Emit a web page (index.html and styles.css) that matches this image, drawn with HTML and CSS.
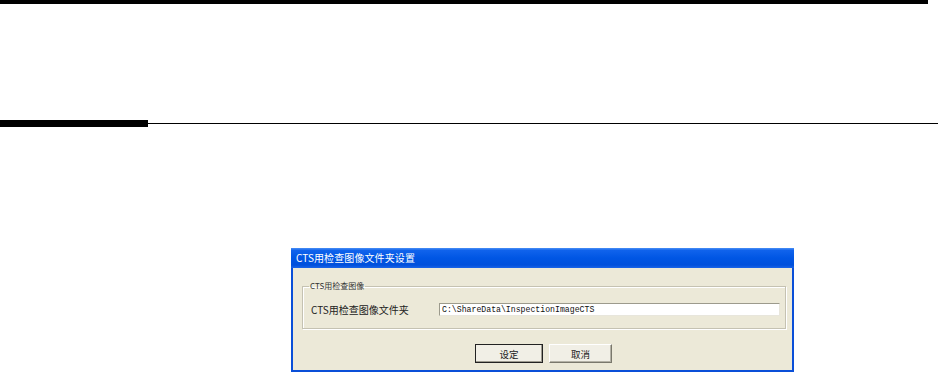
FILE: index.html
```html
<!DOCTYPE html>
<html>
<head>
    <title>CTS用检查图像文件夹设置</title>
    <link rel="stylesheet" href="styles.css">
</head>
<body>
    <div class="top-rule"></div>

    <div class="section-rule">
        <div class="section-mark"></div>
        <div class="section-line"></div>
    </div>

    <div class="figure">
        <div class="dialog">
            <div class="title-bar">CTS用检查图像文件夹设置</div>
            <div class="dialog-body">
                <fieldset class="group">
                    <legend>CTS用检查图像</legend>
                    <div class="field-row">
                        <label class="field-label">CTS用检查图像文件夹</label>
                        <div class="field-input">C:\ShareData\InspectionImageCTS</div>
                    </div>
                </fieldset>
                <div class="buttons">
                    <button class="btn btn-default">设定</button>
                    <button class="btn btn-cancel">取消</button>
                </div>
            </div>
        </div>
    </div>
</body>
</html>
```

FILE: styles.css
```css
body { margin: 0; padding: 0; background: #fff; font-family: "Noto Sans CJK SC", "Liberation Sans", sans-serif; overflow: hidden; }

.top-rule { width: 928px; height: 4px; background: #000; }

.section-rule { display: flex; align-items: center; margin-top: 116px; height: 7px; }
.section-mark { width: 148px; height: 7px; background: #000; }
.section-line { flex: 1; height: 1px; background: #000; }

.figure { padding-left: 291px; margin-top: 121px; }

.dialog { width: 499px; height: 122px; border: 2px solid #0a4fd8; border-top: none; background: #ece9d8; box-sizing: content-box; }
.title-bar { height: 20px; margin: 0 -2px; padding-left: 5px; background: linear-gradient(to bottom, #4a8ff5 0%, #1063ec 12%, #0056e4 50%, #0050dc 85%, #1a64e8 100%); color: #fff; font-size: 10px; line-height: 20px; letter-spacing: 0.1px; }

.dialog-body { padding: 13px 6px 0 9px; }

.group { margin: 0; padding: 4px 0 0 8px; height: 42px; border: 1px solid #c5c2b2; box-shadow: inset 1px 1px 0 #fff, 1px 1px 0 #fff; }
.group legend { padding: 0 1px; margin-left: -2px; font-size: 8px; color: #333; line-height: 10px; }

.field-row { display: flex; align-items: center; margin-top: 7px; }
.field-label { width: 128px; font-size: 10px; color: #222; }
.field-input { width: 337px; height: 11px; border: 1px solid #9c9a8c; border-right-color: #e8e6dc; border-bottom-color: #e8e6dc; background: #fff; font-family: "Liberation Mono", monospace; font-size: 8.2px; line-height: 11px; padding-left: 2px; color: #111; }

.buttons { display: flex; gap: 6px; margin-top: 15px; padding-left: 173px; }
.btn { height: 19px; padding: 0; background: #f1efe6; font-family: "Noto Sans CJK SC", sans-serif; font-size: 9.5px; color: #222; border: 1px solid; border-color: #fff #7a786c #7a786c #fff; }
.btn-default { width: 68px; outline: 1px solid #222; outline-offset: -1px; box-shadow: inset -1px -1px 0 #9d9b8f; }
.btn-cancel { width: 63px; box-shadow: inset -1px -1px 0 #b4b2a6; }
```
